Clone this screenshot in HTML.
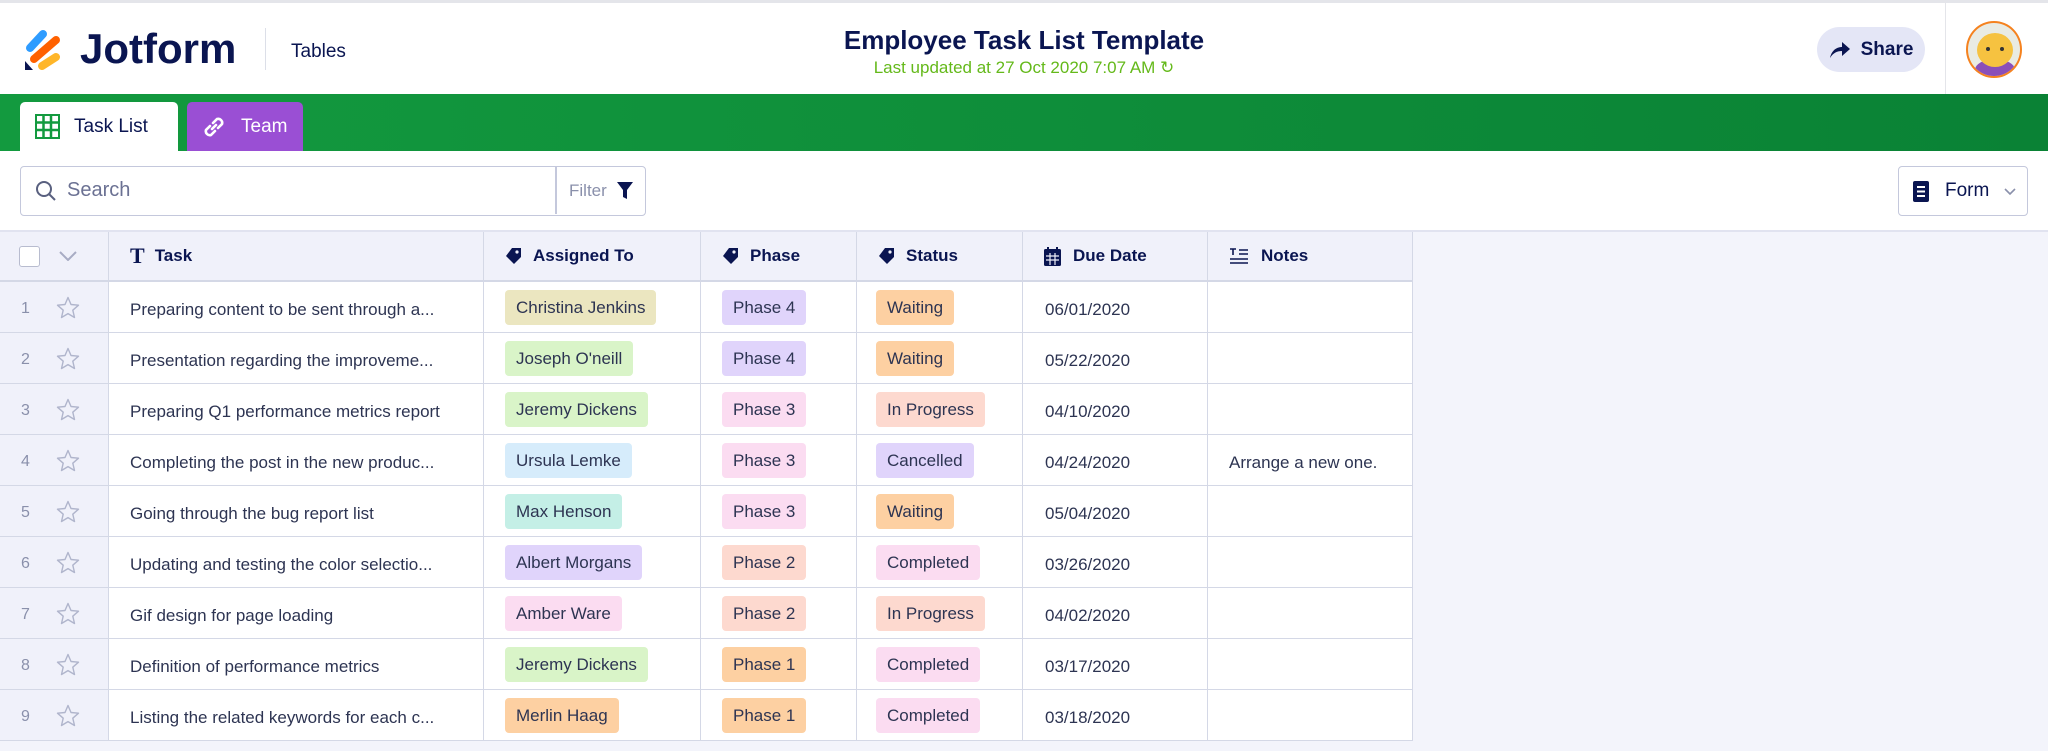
<!DOCTYPE html>
<html><head><meta charset="utf-8"><style>
*{box-sizing:border-box;margin:0;padding:0}
body{width:2048px;height:751px;overflow:hidden;background:#f3f4fb;font-family:"Liberation Sans",sans-serif;color:#0a1551;position:relative}
.abs{position:absolute}
#hdr{left:0;top:0;width:2048px;height:94px;background:#fff;border-top:3px solid #e4e5ea}
#green{left:0;top:94px;width:2048px;height:57px;background:linear-gradient(90deg,#139a3f,#0a8235)}
.tab{top:102px;height:49px;border-radius:5px 5px 0 0;font-size:19px;display:flex;align-items:center}
#bar{left:0;top:151px;width:2048px;height:81px;background:#fff;border-bottom:2px solid #e1e3f0}
.cell{position:absolute;height:51px;border-bottom:1.5px solid #d4d8e6;border-right:1.5px solid #d4d8e6;display:flex;align-items:center;font-size:17px;color:#2d3452;white-space:nowrap;overflow:hidden}
.pill{padding:0 11px;height:35px;line-height:35px;border-radius:4px;font-size:17px;color:#2d3452}
.hcell{position:absolute;top:232px;height:50px;background:#f0f1fa;border-right:1.5px solid #d4d8e6;border-bottom:2px solid #d4d8e6;display:flex;align-items:center;font-size:17px;font-weight:bold;color:#0a1551}
</style></head><body>
<div id="hdr" class="abs">
<svg class="abs" style="left:22px;top:24px" width="44" height="46" viewBox="22 24 44 46">
<line x1="30" y1="45" x2="43" y2="31" stroke="#2e9cff" stroke-width="8" stroke-linecap="round"/>
<line x1="34" y1="56" x2="56" y2="37" stroke="#ff6100" stroke-width="8" stroke-linecap="round"/>
<line x1="42" y1="63" x2="56" y2="54" stroke="#ffb629" stroke-width="8" stroke-linecap="round"/>
<polygon points="25,58 33,67 25,67" fill="#0a1551"/>
</svg>
<div class="abs" style="left:80px;top:22px;font-size:42px;font-weight:bold;letter-spacing:0px;color:#0a1551">Jotform</div>
<div class="abs" style="left:265px;top:25px;width:1px;height:42px;background:#dcdfe8"></div>
<div class="abs" style="left:291px;top:38px;font-size:19px;color:#0a1551">Tables</div>
<div class="abs" style="left:0;width:2048px;top:22px;text-align:center;font-size:26px;font-weight:bold;color:#0a1551">Employee Task List Template</div>
<div class="abs" style="left:0;width:2048px;top:55px;text-align:center;font-size:17px;color:#64b91a">Last updated at 27 Oct 2020 7:07 AM ↻</div>
<div class="abs" style="left:1817px;top:24px;width:108px;height:45px;border-radius:23px;background:#e4e6f6;display:flex;align-items:center;justify-content:center;font-size:19px;font-weight:bold;color:#0a1551"><svg width="22" height="18" viewBox="0 0 22 18" style="margin-right:10px"><path d="M1 17 C3 8 9 6 13 6 V1 L21 8 L13 15 V10 C8 10 4 12 1 17Z" fill="#0a1551"/></svg>Share</div>
<div class="abs" style="left:1945px;top:0;width:1px;height:91px;background:#e4e5ea"></div>
<div class="abs" style="left:1966px;top:18px;width:56px;height:57px;border-radius:50%;background:#e9ebe3;border:2px solid #f5821f;overflow:hidden">
<div class="abs" style="left:7px;top:36px;width:40px;height:22px;border-radius:50% 50% 0 0;background:#8a4fb8"></div>
<div class="abs" style="left:9px;top:10px;width:36px;height:34px;border-radius:50%;background:#f6c240"></div>
<div class="abs" style="left:18px;top:24px;width:4px;height:4px;border-radius:50%;background:#333"></div>
<div class="abs" style="left:32px;top:24px;width:4px;height:4px;border-radius:50%;background:#333"></div>
</div>
</div>
<div id="green" class="abs"></div>
<div class="abs tab" style="left:20px;width:158px;background:#fff;color:#0a1551">
<svg style="margin:0 14px 0 15px" width="25" height="25" viewBox="0 0 25 25"><rect x="1" y="1" width="23" height="23" fill="#fff" stroke="#139a3f" stroke-width="2"/><path d="M1 8.5H24M1 16H24M8.5 1V24M16 1V24" stroke="#139a3f" stroke-width="2.5"/></svg>Task List</div>
<div class="abs tab" style="left:187px;width:116px;background:#9a4fd4;color:#fff">
<svg style="margin:0 14px 0 14px" width="26" height="26" viewBox="0 0 26 26" fill="none" stroke="#fff" stroke-width="2.6" stroke-linecap="round"><path d="M11 15 L15 11"/><path d="M9 12 L5 16 a4 4 0 0 0 5 5 L14 17"/><path d="M12 9 L16 5 a4 4 0 0 1 5 5 L17 14"/></svg>Team</div>
<div id="bar" class="abs">
<div class="abs" style="left:20px;top:15px;width:626px;height:50px;border:1.5px solid #c4c8dc;border-radius:4px;background:#fff">
<svg class="abs" style="left:14px;top:13px" width="22" height="22" viewBox="0 0 22 22" fill="none" stroke="#59607f" stroke-width="2"><circle cx="9" cy="9" r="7"/><path d="M14 14 L20 20"/></svg>
<div class="abs" style="left:46px;top:12px;font-size:20px;color:#6b7193">Search</div>
<div class="abs" style="left:534px;top:0;width:1.5px;height:47px;background:#c4c8dc"></div>
<div class="abs" style="left:548px;top:14px;font-size:17px;color:#8a90ab">Filter</div>
<svg class="abs" style="left:596px;top:15px" width="16" height="18" viewBox="0 0 16 18"><path d="M0 0H16L10 8V17L6 15V8Z" fill="#0a1551"/></svg>
</div>
<div class="abs" style="left:1898px;top:15px;width:130px;height:50px;border:1.5px solid #c4c8dc;border-radius:4px;background:#fff">
<svg class="abs" style="left:14px;top:14px" width="16" height="21" viewBox="0 0 16 21"><rect width="16" height="21" rx="2" fill="#0a1551"/><path d="M4 6H12M4 10.5H12M4 15H12" stroke="#fff" stroke-width="2"/></svg>
<div class="abs" style="left:46px;top:13px;font-size:19px;color:#0a1551">Form</div>
<svg class="abs" style="left:105px;top:21px" width="12" height="8" viewBox="0 0 12 8" fill="none" stroke="#8a90ab" stroke-width="1.6"><path d="M1 1L6 6L11 1"/></svg>
</div>
</div>
<div class="hcell" style="left:0;width:109px"><div style="width:21px;height:21px;border:1.5px solid #b8bccf;border-radius:3px;background:#fff;margin-left:19px"></div><svg style="margin-left:19px" width="18" height="10" viewBox="0 0 18 10" fill="none" stroke="#a8acc4" stroke-width="2"><path d="M1 1L9 9L17 1"/></svg></div>
<div class="hcell" style="left:109px;width:375px;padding-left:21px"><span style="font-family:'Liberation Serif',serif;font-size:22px;margin-right:10px">T</span>Task</div>
<div class="hcell" style="left:484px;width:217px;padding-left:21px"><svg width="18" height="18" viewBox="0 0 18 18" style="margin-right:10px"><path d="M7 1H16V10L9 17L1 9Z" fill="#0a1551"/><circle cx="12" cy="5" r="1.6" fill="#f0f1fa"/></svg>Assigned To</div>
<div class="hcell" style="left:701px;width:156px;padding-left:21px"><svg width="18" height="18" viewBox="0 0 18 18" style="margin-right:10px"><path d="M7 1H16V10L9 17L1 9Z" fill="#0a1551"/><circle cx="12" cy="5" r="1.6" fill="#f0f1fa"/></svg>Phase</div>
<div class="hcell" style="left:857px;width:166px;padding-left:21px"><svg width="18" height="18" viewBox="0 0 18 18" style="margin-right:10px"><path d="M7 1H16V10L9 17L1 9Z" fill="#0a1551"/><circle cx="12" cy="5" r="1.6" fill="#f0f1fa"/></svg>Status</div>
<div class="hcell" style="left:1023px;width:185px;padding-left:21px"><svg width="17" height="19" viewBox="0 0 17 19" style="margin-right:12px"><rect y="2" width="17" height="17" rx="1.5" fill="#0a1551"/><rect x="3" y="0" width="2" height="4" fill="#0a1551"/><rect x="12" y="0" width="2" height="4" fill="#0a1551"/><path d="M2 9H15M2 13H15M6 6V18M11 6V18" stroke="#f0f1fa" stroke-width="1.2"/></svg>Due Date</div>
<div class="hcell" style="left:1208px;width:205px;padding-left:21px"><svg width="20" height="16" viewBox="0 0 20 16" style="margin-right:12px" stroke="#0a1551" stroke-width="1.6" fill="none"><path d="M1 1H7M4 1V7M10 2H19M10 6H19M1 11H19M1 15H19"/></svg>Notes</div>
<div id="rows"></div>
<script>
const C={y:'#ebe6c0',g:'#d9f4c8',b:'#d6ecfb',t:'#c4efe6',p:'#e0d4fb',pk:'#fbdcf1',s:'#fdd9cf',o:'#fdd0a2'};
const R=[["Preparing content to be sent through a...","Christina Jenkins","y","Phase 4","p","Waiting","o","06/01/2020",""],
["Presentation regarding the improveme...","Joseph O'neill","g","Phase 4","p","Waiting","o","05/22/2020",""],
["Preparing Q1 performance metrics report","Jeremy Dickens","g","Phase 3","pk","In Progress","s","04/10/2020",""],
["Completing the post in the new produc...","Ursula Lemke","b","Phase 3","pk","Cancelled","p","04/24/2020","Arrange a new one."],
["Going through the bug report list","Max Henson","t","Phase 3","pk","Waiting","o","05/04/2020",""],
["Updating and testing the color selectio...","Albert Morgans","p","Phase 2","s","Completed","pk","03/26/2020",""],
["Gif design for page loading","Amber Ware","pk","Phase 2","s","In Progress","s","04/02/2020",""],
["Definition of performance metrics","Jeremy Dickens","g","Phase 1","o","Completed","pk","03/17/2020",""],
["Listing the related keywords for each c...","Merlin Haag","o","Phase 1","o","Completed","pk","03/18/2020",""]];
let h='';
R.forEach((r,i)=>{const t=282+i*51;
h+=`<div class="cell" style="left:0;top:${t}px;width:109px;background:#f0f1fa;color:#8a90ab;font-size:16px"><span style="width:28px;margin-left:21px;padding-top:4px">${i+1}</span><svg width="24" height="23" viewBox="0 0 24 23" style="margin-left:7px"><path d="M12 1.5L15 8.5L22.5 9.2L16.8 14.2L18.5 21.5L12 17.6L5.5 21.5L7.2 14.2L1.5 9.2L9 8.5Z" fill="none" stroke="#b0b5cc" stroke-width="1.4" stroke-linejoin="round"/></svg></div>`;
h+=`<div class="cell" style="left:109px;top:${t}px;width:375px;background:#fff;padding-left:21px;padding-top:6px">${r[0]}</div>`;
h+=`<div class="cell" style="left:484px;top:${t}px;width:217px;background:#fff;padding-left:21px"><span class="pill" style="background:${C[r[2]]}">${r[1]}</span></div>`;
h+=`<div class="cell" style="left:701px;top:${t}px;width:156px;background:#fff;padding-left:21px"><span class="pill" style="background:${C[r[4]]}">${r[3]}</span></div>`;
h+=`<div class="cell" style="left:857px;top:${t}px;width:166px;background:#fff;padding-left:19px"><span class="pill" style="background:${C[r[6]]}">${r[5]}</span></div>`;
h+=`<div class="cell" style="left:1023px;top:${t}px;width:185px;background:#fff;padding-left:22px;padding-top:6px">${r[7]}</div>`;
h+=`<div class="cell" style="left:1208px;top:${t}px;width:205px;background:#fff;padding-left:21px;padding-top:6px">${r[8]}</div>`;});
document.getElementById('rows').innerHTML=h;
</script>
</body></html>
